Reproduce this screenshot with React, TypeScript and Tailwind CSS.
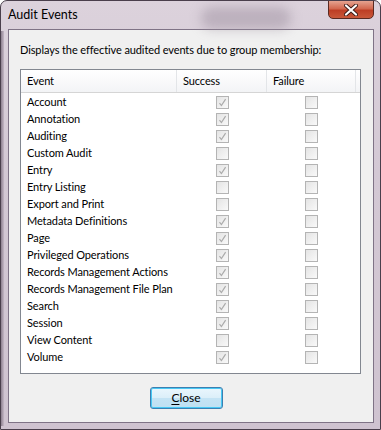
import React from "react";

const events: [string, boolean][] = [
  ["Account", true],
  ["Annotation", true],
  ["Auditing", true],
  ["Custom Audit", false],
  ["Entry", true],
  ["Entry Listing", false],
  ["Export and Print", false],
  ["Metadata Definitions", true],
  ["Page", true],
  ["Privileged Operations", true],
  ["Records Management Actions", true],
  ["Records Management File Plan", true],
  ["Search", true],
  ["Session", true],
  ["View Content", false],
  ["Volume", true],
];

function Box({ checked }: { checked: boolean }) {
  return (
    <div className="w-[13px] h-[13px] border border-[#b4b4b4] bg-[linear-gradient(135deg,#e4e4e4,#f9f9f9)] flex items-center justify-center">
      {checked && (
        <svg width="9" height="9" viewBox="0 0 9 9">
          <path d="M1.5 5.2 L3.4 7.6 L7.6 1.2" stroke="#ababab" strokeWidth="1.2" fill="none" />
        </svg>
      )}
    </div>
  );
}

export default function App() {
  return (
    <div className="relative w-[381px] h-[430px] overflow-hidden rounded-t-[7px] border border-[#4a3f4c] bg-[linear-gradient(180deg,#dcd2dc_0%,#d3c8d4_40%,#cfc3d0_100%)] font-['Lato',sans-serif] text-[11px] tracking-[-0.1px] text-black">
      {/* blurred glass behind the title bar */}
      <div className="absolute left-[200px] top-[6px] w-[90px] h-[22px] rounded-full bg-[#9c8f9e] opacity-50 blur-[6px]" />
      <div className="absolute left-0 top-[30px] w-[3px] h-[395px] bg-[linear-gradient(90deg,#8c7f8e,#c5b8c6)]" />

      <div className="relative flex h-[28px]">
        <div className="pl-[7px] pt-[6px] text-[12.5px] leading-[16px] tracking-normal">Audit Events</div>
        <div className="ml-auto mr-[6px] w-[46px] h-[19px] -mt-px rounded-b-[5px] border border-[#5a2a22] bg-[linear-gradient(180deg,#e5a390_0%,#d2684f_45%,#bd3e25_55%,#c9583a_100%)] flex items-center justify-center">
          <svg width="14" height="12" viewBox="0 0 14 12">
            <path d="M2 1.5 L12 10.5 M12 1.5 L2 10.5" stroke="#3b1a16" strokeWidth="4" strokeLinecap="round" />
            <path d="M2 1.5 L12 10.5 M12 1.5 L2 10.5" stroke="#ffffff" strokeWidth="2.2" strokeLinecap="round" />
          </svg>
        </div>
      </div>

      <div className="ml-[7px] w-[366px] h-[394px] border border-[#7f7386] bg-[#f0f0f0] flex flex-col">
        <div className="pl-[11px] pt-[13px] h-[39px] leading-[14px]">
          Displays the effective audited events due to group membership:
        </div>

        <div className="ml-[11px] w-[341px] h-[305px] border border-[#828790] bg-white flex flex-col">
          <div className="flex h-[23px] border-b border-[#d5d5d5] bg-[linear-gradient(180deg,#ffffff,#f3f4f6)]">
            <div className="w-[156px] pl-[6px] flex items-center border-r border-[#e3e5e8]">Event</div>
            <div className="w-[90px] pl-[6px] flex items-center border-r border-[#e3e5e8]">Success</div>
            <div className="w-[89px] pl-[6px] flex items-center border-r border-[#e3e5e8]">Failure</div>
          </div>
          <div className="pt-[1px] flex flex-col">
            {events.map(([name, ok]) => (
              <div key={name} className="flex h-[17px] items-center">
                <div className="w-[156px] pl-[6px] whitespace-nowrap">{name}</div>
                <div className="w-[90px] flex justify-center">
                  <Box checked={ok} />
                </div>
                <div className="w-[89px] flex justify-center">
                  <Box checked={false} />
                </div>
              </div>
            ))}
          </div>
        </div>

        <div className="flex justify-center pt-[13px] pr-[10px]">
          <button className="w-[73px] h-[22px] rounded-[3px] border border-[#3c7fb1] shadow-[inset_0_0_0_1px_#48c8f4] bg-[linear-gradient(180deg,#eaf6fd_0%,#dceff9_48%,#c4e3f4_52%,#bfe0f2_100%)] text-[12px] leading-none tracking-normal">
            <span className="underline underline-offset-2">C</span>lose
          </button>
        </div>
      </div>
    </div>
  );
}
